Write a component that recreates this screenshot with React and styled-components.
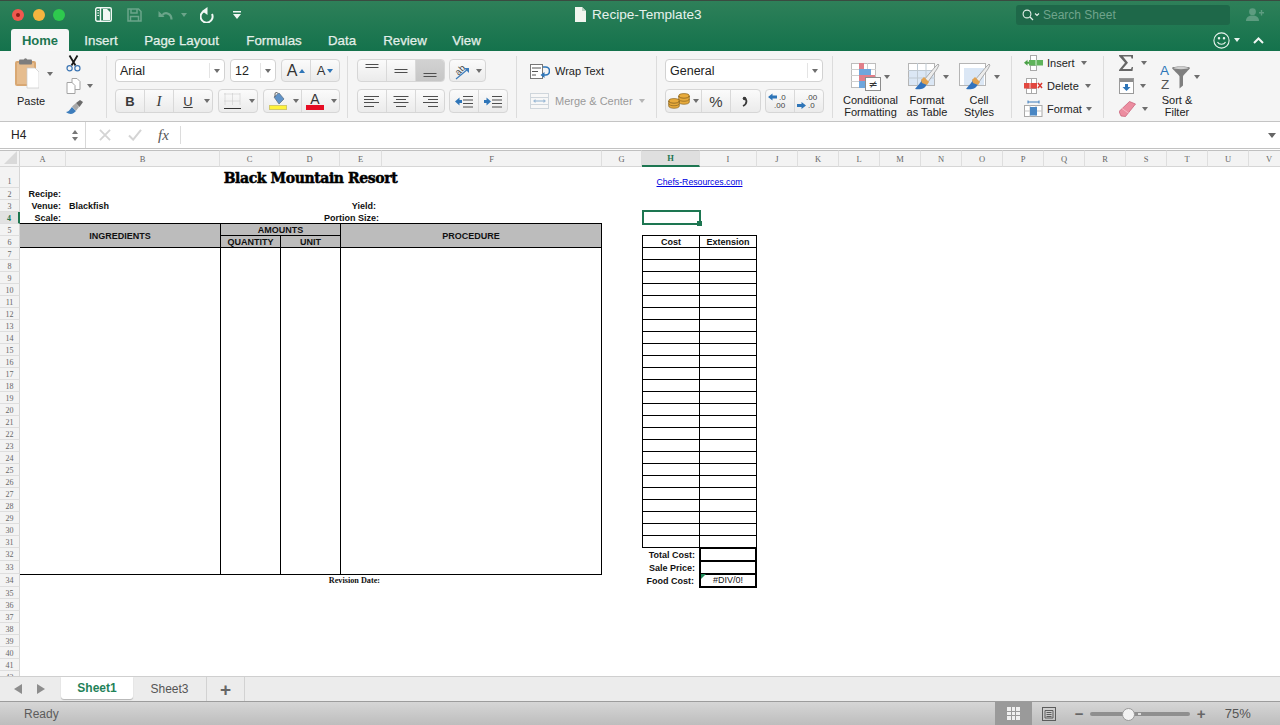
import React from "react";
import styled, { createGlobalStyle } from "styled-components";

const GlobalStyle = createGlobalStyle`
  html, body { margin: 0; padding: 0; background: #fff; }
  body { font-family: "Liberation Sans", Arial, sans-serif; }
`;

const Window = styled.div`
  width: 1280px;
  height: 725px;
  display: flex;
  flex-direction: column;
  overflow: hidden;
  background: #fff;
`;

/* ---------- green header ---------- */

const Header = styled.div`
  height: 51px;
  flex: none;
  background: linear-gradient(#2e8059, #14724c);
  border-top: 1px solid #3a4a40;
  box-sizing: border-box;
`;

const TitleRow = styled.div`
  height: 27px;
  display: flex;
  align-items: center;
  position: relative;
`;

const Light = styled.span`
  width: 12px;
  height: 12px;
  border-radius: 50%;
  background: ${(p) => p.$color};
  margin-left: ${(p) => p.$gap}px;
  flex: none;
  display: flex;
  align-items: center;
  justify-content: center;
  &::after {
    content: "";
    width: 4px;
    height: 4px;
    border-radius: 50%;
    background: ${(p) => p.$dot || "transparent"};
  }
`;

const TitleIcon = styled.span`
  display: flex;
  align-items: center;
  margin-left: ${(p) => p.$gap}px;
  flex: none;
`;

const DocTitle = styled.span`
  margin-left: 6px;
  font-size: 13.6px;
  color: #e6f1ec;
  width: 114px;
  white-space: nowrap;
`;

const SearchBox = styled.div`
  margin-left: 310px;
  width: 214px;
  height: 20px;
  border-radius: 3px;
  background: #1e6849;
  display: flex;
  align-items: center;
  padding-left: 6px;
  box-sizing: border-box;
  gap: 3px;
  font-size: 12px;
  color: #6fa48c;
`;

const TabRow = styled.div`
  height: 23px;
  display: flex;
  align-items: flex-end;
  padding-left: 11px;
`;

const Tab = styled.div`
  height: 22px;
  display: flex;
  align-items: center;
  justify-content: center;
  font-size: ${(p) => (p.$active ? 13 : 13.3)}px;
  font-weight: ${(p) => (p.$active ? 700 : 400)};
  color: ${(p) => (p.$active ? "#1d7651" : "#e3efe9")};
  background: ${(p) => (p.$active ? "#f6f6f6" : "transparent")};
  border-radius: 3px 3px 0 0;
  width: ${(p) => p.$w}px;
  margin-right: ${(p) => p.$gap}px;
  -webkit-text-stroke: ${(p) => (p.$active ? 0 : "0.25px")};
  white-space: nowrap;
`;

const TabTools = styled.div`
  margin-left: auto;
  height: 22px;
  display: flex;
  align-items: center;
  padding-right: 16px;
`;

/* ---------- ribbon ---------- */

const Ribbon = styled.div`
  height: 71px;
  flex: none;
  box-sizing: border-box;
  display: flex;
  background: #f5f5f5;
  border-bottom: 1px solid #c4c4c4;
`;

const Group = styled.div`
  width: ${(p) => p.$w}px;
  box-sizing: border-box;
  padding-left: ${(p) => p.$pad}px;
  margin: 5px 0 3px;
  border-right: ${(p) => (p.$last ? "none" : "1px solid #dcdcdc")};
  display: flex;
  flex-direction: ${(p) => p.$dir || "column"};
  flex: none;
`;

const Stack = styled.div`
  padding-top: 3px;
  display: flex;
  flex-direction: column;
  gap: 7px;
`;

const Row = styled.div`
  display: flex;
  gap: ${(p) => p.$gap ?? 4}px;
  height: ${(p) => p.$h}px;
`;

const Select = styled.div`
  width: ${(p) => p.$w}px;
  height: 100%;
  box-sizing: border-box;
  background: #fff;
  border: 1px solid #d2d2d2;
  border-radius: 4px;
  display: flex;
  align-items: center;
  justify-content: space-between;
  padding-left: 4px;
  font-size: 12.5px;
  color: #222;
`;

const SelectArrow = styled.span`
  width: 14px;
  height: 15px;
  border-left: 1px solid #e4e4e4;
  display: flex;
  align-items: center;
  justify-content: center;
`;

const Caret = styled.span`
  display: inline-block;
  flex: none;
  width: 0;
  height: 0;
  border-left: ${(p) => p.$s || 3}px solid transparent;
  border-right: ${(p) => p.$s || 3}px solid transparent;
  ${(p) => (p.$up ? "border-bottom" : "border-top")}: ${(p) => (p.$s || 3) + 1}px solid ${(p) => p.$color || "#6e6e6e"};
  margin-left: ${(p) => p.$ml || 0}px;
`;

const Segments = styled.div`
  display: flex;
  height: 100%;
  border: 1px solid #d6d6d6;
  border-radius: 4px;
  box-sizing: border-box;
  overflow: hidden;
  background: linear-gradient(#fbfbfb, #ebebeb);
`;

const Seg = styled.div`
  width: ${(p) => p.$w}px;
  display: flex;
  align-items: center;
  justify-content: center;
  flex: none;
  box-sizing: border-box;
  color: #333;
  border-right: ${(p) => (p.$noLine ? "none" : "1px solid #d9d9d9")};
  background: ${(p) => (p.$on ? "linear-gradient(#d2d2d2, #c6c6c6)" : "transparent")};
  &:last-child { border-right: none; }
`;

const BoldA = styled.span`
  font-size: ${(p) => p.$size}px;
  color: #333;
  line-height: 1;
  margin-right: 2px;
`;

const StyleLetter = styled.span`
  font-family: ${(p) => (p.$serif ? '"Liberation Serif", serif' : '"Liberation Sans", sans-serif')};
  font-weight: ${(p) => (p.$bold ? 700 : 400)};
  font-style: ${(p) => (p.$italic ? "italic" : "normal")};
  text-decoration: ${(p) => (p.$under ? "underline" : "none")};
  font-size: ${(p) => p.$size || 13}px;
  color: #3a3a3a;
`;

const PasteColumn = styled.div`
  width: 44px;
  margin-left: 15px;
  display: flex;
  flex-direction: column;
`;

const PasteIconRow = styled.div`
  display: flex;
  align-items: center;
  gap: 8px;
  margin-top: 2px;
`;

const RibbonLabel = styled.div`
  font-size: 11px;
  line-height: 12px;
  color: ${(p) => p.$color || "#222"};
  text-align: center;
  white-space: nowrap;
`;

const PasteLabel = styled(RibbonLabel)`
  width: 32px;
  margin-top: 6px;
`;

const ClipTools = styled.div`
  margin-left: 7px;
  display: flex;
  flex-direction: column;
  gap: 6px;
  width: 32px;
  margin-top: -1px;
`;

const ToolRow = styled.div`
  display: flex;
  align-items: center;
  gap: 6px;
`;

const WrapRow = styled.div`
  height: 30px;
  display: flex;
  align-items: center;
  gap: 5px;
`;

const BigButton = styled.div`
  width: ${(p) => p.$w}px;
  display: flex;
  flex-direction: column;
  align-items: center;
  flex: none;
`;

const BigIcon = styled.div`
  height: 33px;
  margin-top: 4px;
  margin-bottom: 1px;
  display: flex;
  align-items: center;
  gap: 3px;
  padding-left: ${(p) => p.$pl || 0}px;
`;

const CellRows = styled.div`
  margin-top: -5px;
  display: flex;
  flex-direction: column;
`;

const CellRow = styled.div`
  height: 23px;
  display: flex;
  align-items: center;
  gap: 4px;
  font-size: 11px;
  color: #222;
`;

const EditColumn = styled.div`
  width: 34px;
  margin-top: -1px;
  display: flex;
  flex-direction: column;
  gap: 7px;
`;

/* ---------- formula bar ---------- */

const FormulaBar = styled.div`
  height: 27px;
  flex: none;
  box-sizing: border-box;
  display: flex;
  align-items: center;
  background: #fff;
  border-bottom: 1px solid #c2c2c2;
`;

const NameBox = styled.div`
  width: 86px;
  height: 100%;
  flex: none;
  box-sizing: border-box;
  padding: 0 7px 0 11px;
  border-right: 1px solid #d8d8d8;
  display: flex;
  align-items: center;
  justify-content: space-between;
  font-size: 12px;
  color: #222;
`;

const Stepper = styled.div`
  display: flex;
  flex-direction: column;
  gap: 3px;
`;

const FormulaTools = styled.div`
  width: 95px;
  height: 18px;
  flex: none;
  box-sizing: border-box;
  padding-left: 13px;
  border-right: 1px solid #dcdcdc;
  display: flex;
  align-items: center;
  gap: 17px;
`;

const Fx = styled.span`
  font-family: "Liberation Serif", serif;
  font-style: italic;
  font-size: 15px;
  color: #555;
  margin-left: -1px;
`;

const FormulaFill = styled.div`
  flex: 1;
  display: flex;
  justify-content: flex-end;
  padding-right: 4px;
`;

/* ---------- sheet grid ---------- */

const colWidths = [46, 154, 60, 60, 42, 220, 40, 58, 57, 41, 41, 41, 41, 41, 41, 41, 41, 41, 41, 41, 41, 41];
const letters = "ABCDEFGHIJKLMNOPQRSTUV".split("");
const rowNumbers = Array.from({ length: 42 }, (_, i) => i + 1);
const colIndex = (c) => c.charCodeAt(0) - 63;

const Sheet = styled.div`
  flex: none;
  height: 527px;
  overflow: hidden;
  display: grid;
  grid-template-columns: 20px ${colWidths.map((w) => w + "px").join(" ")};
  grid-template-rows: 17px 21px repeat(30, 12px) repeat(3, 13px) repeat(8, 12px);
  background: #fff;
  border-top: 1px solid #fff;
  box-sizing: border-box;
`;

const Corner = styled.div`
  grid-column: 1;
  grid-row: 1;
  background: #f3f3f3;
  border-top: 1px solid #c0c0c0;
  border-bottom: 1px solid #d6d6d6;
  border-right: 1px solid #d6d6d6;
  box-sizing: border-box;
  display: flex;
  align-items: flex-end;
  justify-content: flex-end;
  padding: 0 2px 2px 0;
`;

const ColHeader = styled.div`
  grid-column: ${(p) => p.$col};
  grid-row: 1;
  display: flex;
  align-items: center;
  justify-content: center;
  box-sizing: border-box;
  font-family: "Liberation Serif", serif;
  font-size: 8.5px;
  color: ${(p) => (p.$active ? "#1d7651" : "#666")};
  font-weight: ${(p) => (p.$active ? 700 : 400)};
  background: ${(p) => (p.$active ? "#dfdfdf" : "#f3f3f3")};
  border-top: 1px solid #c0c0c0;
  border-right: 1px solid #dedede;
  border-bottom: ${(p) => (p.$active ? "2px solid #1d7651" : "1px solid #d6d6d6")};
`;

const RowHeader = styled.div`
  grid-column: 1;
  grid-row: ${(p) => p.$row + 1};
  display: flex;
  align-items: center;
  justify-content: center;
  box-sizing: border-box;
  padding-top: ${(p) => (p.$row === 1 ? 8 : 1)}px;
  font-family: "Liberation Serif", serif;
  font-size: 8px;
  color: ${(p) => (p.$active ? "#1d7651" : "#666")};
  font-weight: ${(p) => (p.$active ? 700 : 400)};
  background: ${(p) => (p.$active ? "#e2e2e2" : "#f3f3f3")};
  border-bottom: 1px solid #dedede;
  border-right: ${(p) => (p.$active ? "2px solid #1d7651" : "1px solid #d6d6d6")};
`;

const Cell = styled.div`
  grid-column: ${(p) => colIndex(p.$col)} / span ${(p) => p.$cols || 1};
  grid-row: ${(p) => p.$row + 1} / span ${(p) => p.$rows || 1};
  min-width: 0;
  display: flex;
  align-items: center;
  justify-content: ${(p) => p.$align || "flex-end"};
  padding: ${(p) => p.$pad || "0"};
  box-sizing: border-box;
  font-size: 9px;
  font-weight: 700;
  color: #111;
  white-space: nowrap;
`;

const SheetTitle = styled(Cell)`
  font-family: "DejaVu Serif", serif;
  font-size: 14px;
  letter-spacing: -0.4px;
  font-weight: 700;
  color: #000;
  -webkit-text-stroke: 0.5px #000;
  padding-right: 1px;
`;

const RevisionDate = styled(Cell)`
  font-family: "Liberation Serif", serif;
  font-size: 8.2px;
`;

const HyperLink = styled(Cell)`
  font-size: 8.7px;
  font-weight: 400;
  color: #0000e0;
  text-decoration: underline;
`;

const TableCell = styled(Cell)`
  border-left: ${(p) => (p.$noLeft ? "none" : "1px solid #000")};
  border-right: ${(p) => (p.$right ? "1px solid #000" : "none")};
  border-bottom: 1px solid #000;
  background: ${(p) => (p.$grey ? "#bcbcbc" : "transparent")};
  justify-content: center;
`;

const TopTableCell = styled(TableCell)`
  border-top: 1px solid #000;
  margin-top: -1px;
`;

const BodyColumn = styled(TableCell)`
  margin-bottom: -1px;
`;

const CostCell = styled(Cell)`
  border-left: ${(p) => (p.$left ? "1px solid #000" : "none")};
  border-right: 1px solid #000;
  border-bottom: 1px solid #000;
  border-top: ${(p) => (p.$top ? "1px solid #000" : "none")};
  margin-top: ${(p) => (p.$top ? "-1px" : "0")};
  justify-content: center;
`;

const TotalCell = styled(Cell)`
  position: relative;
  margin: ${(p) => (p.$top ? "-1px" : "0")} 0 -1px -1px;
  border: 2px solid #000;
  border-top-width: ${(p) => (p.$top ? "2px" : "0")};
  justify-content: center;
  font-weight: 400;
`;

const ErrorFlag = styled.span`
  position: absolute;
  left: 0;
  top: 0;
  width: 0;
  height: 0;
  border-top: 5px solid #1f8a5a;
  border-right: 5px solid transparent;
`;

const Selection = styled(Cell)`
  position: relative;
  margin: -2px -1px -1px 0;
  border: 2px solid #1d7651;
  &::after {
    content: "";
    position: absolute;
    right: -3px;
    bottom: -3px;
    width: 5px;
    height: 5px;
    background: #1d7651;
  }
`;

/* ---------- sheet tabs and status bar ---------- */

const SheetTabs = styled.div`
  height: 26px;
  flex: none;
  box-sizing: border-box;
  display: flex;
  background: #ececec;
  border-top: 1px solid #cfcfcf;
  border-bottom: 1px solid #9c9c9c;
`;

const TabArrows = styled.div`
  width: 61px;
  flex: none;
  display: flex;
  align-items: center;
  gap: 15px;
  padding-left: 14px;
  box-sizing: border-box;
`;

const Arrow = styled.span`
  width: 0;
  height: 0;
  border-top: 5px solid transparent;
  border-bottom: 5px solid transparent;
  ${(p) => (p.$left ? "border-right" : "border-left")}: 8px solid #8d8d8d;
`;

const SheetTab = styled.div`
  width: ${(p) => p.$w}px;
  height: ${(p) => (p.$active ? "22px" : "100%")};
  flex: none;
  box-sizing: border-box;
  display: flex;
  align-items: center;
  justify-content: center;
  font-size: 12px;
  font-weight: ${(p) => (p.$active ? 700 : 400)};
  color: ${(p) => (p.$active ? "#1f8259" : "#555")};
  background: ${(p) => (p.$active ? "#fff" : "transparent")};
  border-radius: ${(p) => (p.$active ? "0 0 3px 3px" : "0")};
  box-shadow: ${(p) => (p.$active ? "0 1px 1px #b4b4b4" : "none")};
  border-right: ${(p) => (p.$line ? "1px solid #d2d2d2" : "none")};
`;

const AddSheet = styled.span`
  font-size: 19px;
  font-weight: 700;
  line-height: 1;
  color: #666;
`;

const StatusBar = styled.div`
  flex: 1;
  display: flex;
  align-items: center;
  background: linear-gradient(#d6d6d6, #bdbdbd);
  color: #5c5c5c;
  font-size: 12px;
  padding-left: 24px;
`;

const ViewButton = styled.div`
  margin-left: ${(p) => p.$ml || 0}px;
  width: ${(p) => p.$w}px;
  height: 23px;
  flex: none;
  display: flex;
  align-items: center;
  justify-content: center;
  background: ${(p) => (p.$on ? "#9a9a9a" : "transparent")};
`;

const ZoomControls = styled.div`
  margin-left: 8px;
  display: flex;
  align-items: center;
`;

const ZoomTrack = styled.div`
  width: 100px;
  height: 4px;
  border-radius: 2px;
  background: #8f8f8f;
  margin: 0 6px 0 5px;
  position: relative;
  flex: none;
`;

const ZoomThumb = styled.span`
  position: absolute;
  left: 32px;
  top: -4px;
  width: 11px;
  height: 11px;
  border-radius: 50%;
  background: #f2f2f2;
  border: 1px solid #999;
`;

const ZoomTick = styled.span`
  position: absolute;
  left: 48px;
  top: 1px;
  width: 3px;
  height: 2px;
  background: #dcdcdc;
`;

const ZoomSign = styled.span`
  font-size: 15px;
  font-weight: 700;
  color: #666;
  width: 11px;
  text-align: center;
  flex: none;
`;

const ZoomValue = styled.span`
  margin-left: 18px;
  font-size: 13px;
  color: #555;
  flex: none;
`;

/* ---------- icons ---------- */

const SidebarIcon = () => (
  <svg width="17" height="15" viewBox="0 0 17 15" fill="none">
    <rect x="0.7" y="0.7" width="15.6" height="13.6" rx="1.5" stroke="#f2f8f5" strokeWidth="1.4" />
    <path d="M5.5 1v13" stroke="#f2f8f5" strokeWidth="1.4" />
    <path d="M2.3 3.5h1.8M2.3 6h1.8M2.3 8.5h1.8" stroke="#f2f8f5" />
    <path d="M8 2h4l3 3v8H8z" fill="#f2f8f5" />
  </svg>
);

const SaveIcon = () => (
  <svg width="15" height="14" viewBox="0 0 15 14" fill="none" stroke="#6ba58a" strokeWidth="1.5">
    <path d="M1 1h10.5L14 3.5V13H1z" />
    <path d="M4 1v4h6V1M3.5 13V8.5h8V13" />
  </svg>
);

const UndoIcon = () => (
  <svg width="16" height="13" viewBox="0 0 16 13" fill="none" stroke="#6ba58a" strokeWidth="2.2">
    <path d="M14.5 11.5c0-6-6-8-9-4.5" />
    <path d="M1.5 3v6h6z" fill="#6ba58a" stroke="none" />
  </svg>
);

const RedoIcon = () => (
  <svg width="16" height="16" viewBox="0 0 16 16" fill="none">
    <path d="M5 3.5a6 6 0 1 0 7.5 3" stroke="#f2f8f5" strokeWidth="2" transform="translate(-0.5 0.5)" />
    <path d="M10.5 0v8L5 4z" fill="#f2f8f5" transform="translate(-3 0)" />
  </svg>
);

const CustomizeIcon = () => (
  <svg width="10" height="8" viewBox="0 0 10 8">
    <path d="M1 0h8v1.5H1zM1 3h8L5 8z" fill="#f0f6f3" />
  </svg>
);

const DocIcon = () => (
  <svg width="11" height="15" viewBox="0 0 11 15">
    <path d="M0 0h7l4 4v11H0z" fill="#f1f5ef" />
    <path d="M7 0l4 4H7z" fill="#b7cfc0" />
  </svg>
);

const SearchIcon = () => (
  <svg width="18" height="12" viewBox="0 0 18 12" fill="none" stroke="#e4efe9">
    <circle cx="5" cy="5" r="3.9" strokeWidth="1.1" />
    <path d="M8 8l3 3" strokeWidth="1.3" />
    <path d="M13 4.5l2 2 2-2" strokeWidth="1.1" />
  </svg>
);

const PersonAddIcon = () => (
  <svg width="18" height="13" viewBox="0 0 18 13" fill="#5d9c80">
    <circle cx="6.5" cy="3.7" r="3.4" />
    <path d="M0 13c0-4 3-5.5 6.5-5.5S13 9 13 13z" />
    <path d="M13 4h1.8V2h1.4v2H18v1.4h-1.8v2h-1.4v-2H13z" />
  </svg>
);

const SmileyIcon = () => (
  <svg width="17" height="17" viewBox="0 0 17 17" fill="none" stroke="#e9f3ee" strokeWidth="1.1">
    <circle cx="8.5" cy="8.5" r="7.6" />
    <path d="M4.5 10c1.5 3 6.5 3 8 0" />
    <circle cx="6" cy="6.3" r="0.7" fill="#e9f3ee" />
    <circle cx="11" cy="6.3" r="0.7" fill="#e9f3ee" />
  </svg>
);

const ChevronUp = () => (
  <svg width="11" height="7" viewBox="0 0 11 7" fill="none" stroke="#f0f6f3" strokeWidth="2">
    <path d="M1 6l4.5-4.5L10 6" />
  </svg>
);

const PasteIcon = () => (
  <svg width="24" height="31" viewBox="0 0 24 31">
    <rect x="0" y="3" width="21" height="25" rx="2" fill="#d9a873" />
    <rect x="2" y="5" width="17" height="21" fill="#e6bd8f" />
    <rect x="4" y="1.5" width="13" height="5" rx="1" fill="#7d7d7d" />
    <circle cx="10.5" cy="1.8" r="1.6" fill="#7d7d7d" />
    <path d="M12 10h8l4 4v16H12z" fill="#fff" stroke="#c9c9c9" strokeWidth="0.7" />
  </svg>
);

const CutIcon = () => (
  <svg width="15" height="17" viewBox="0 0 15 17" fill="none">
    <path d="M3.5 0.5l6 10M11.5 0.5l-6 10" stroke="#1a1a1a" strokeWidth="1.8" />
    <circle cx="3.6" cy="13.2" r="2.6" stroke="#3b75b3" strokeWidth="1.2" />
    <circle cx="11.4" cy="13.2" r="2.6" stroke="#3b75b3" strokeWidth="1.2" />
  </svg>
);

const CopyIcon = () => (
  <svg width="15" height="16" viewBox="0 0 15 16" fill="#fff" stroke="#a4a4a4">
    <path d="M6 .5h5l3 3v8H6z" />
    <path d="M1 4.5h5l3 3v8H1z" />
  </svg>
);

const BrushIcon = () => (
  <svg width="17" height="16" viewBox="0 0 17 16">
    <path d="M0 12c3 0 4-3 6-5l4 4c-2 2-5 5-10 1z" fill="#3d7dbc" />
    <path d="M6 6.500l4-3.500 3 4-3 3.700z" fill="#a8a8a8" />
    <path d="M10 3l4-3 3 2-3.500 5z" fill="#6b6b6b" />
  </svg>
);

const BordersIcon = () => (
  <svg width="17" height="17" viewBox="0 0 17 17" fill="none">
    <path d="M.5 1h16M.5 8h16M1 .5v12M8.500.5v12M16 .5v12" stroke="#c4c4c4" strokeDasharray="1 1" />
    <path d="M0 15.500h17" stroke="#333" />
  </svg>
);

const FillIcon = () => (
  <svg width="18" height="18" viewBox="0 0 18 18">
    <path d="M5 5l5-4 5 6-5 5z" fill="#5f93c9" stroke="#586b80" strokeWidth="0.7" />
    <path d="M9 1.500C8 0 6 0 6 2v3" stroke="#666" fill="none" />
    <rect x="0.5" y="13.500" width="17" height="4" fill="#fff33b" stroke="#d2c96a" />
  </svg>
);

const FontColorIcon = () => (
  <svg width="18" height="18" viewBox="0 0 18 18">
    <text x="9" y="12" fontSize="14" textAnchor="middle" fill="#333" fontFamily="Liberation Sans">A</text>
    <rect x="0" y="13" width="18" height="5" fill="#e60d24" />
  </svg>
);

const Lines = ({ widths, align = "left", top = 2, gap = 3.2, w = 16, h = 15 }) => (
  <svg width={w} height={h} viewBox={`0 0 ${w} ${h}`} stroke="#4e4e4e" strokeWidth="1">
    {widths.map((lw, i) => {
      const x = align === "left" ? 0 : align === "right" ? w - lw : (w - lw) / 2;
      const y = Math.round(top + i * gap) + 0.5;
      return <line key={i} x1={x} x2={x + lw} y1={y} y2={y} />;
    })}
  </svg>
);

const OrientIcon = () => (
  <svg width="18" height="18" viewBox="0 0 18 18">
    <text x="2" y="11" fontSize="9" fill="#444" fontFamily="Liberation Sans" transform="rotate(-45 7 8)">ab</text>
    <path d="M3 17L15 7" stroke="#3d7dbc" strokeWidth="1.2" />
    <path d="M11 6h5v5z" fill="#3d7dbc" />
  </svg>
);

const IndentIcon = ({ flip }) => (
  <svg width="18" height="13" viewBox="0 0 18 13">
    <path d="M8 1.500h10M8 5h10M8 8.500h10M8 12h10" stroke="#4e4e4e" />
    <path d={flip ? "M7 6.500L2.500 2.500V5H0v3h2.500v2.500z" : "M0 6.500l4.500-4V5H7v3H4.500v2.500z"} fill="#2e75b8" />
  </svg>
);

const WrapIcon = () => (
  <svg width="20" height="15" viewBox="0 0 20 15" fill="none">
    <rect x="0.5" y="0.5" width="12" height="14" fill="#fff" stroke="#777" />
    <path d="M2 4h9M2 7.500h6M2 11h4" stroke="#555" />
    <path d="M13 3h2.500a3.500 3.500 0 0 1 0 8H12" stroke="#2e75b8" strokeWidth="1.6" />
    <path d="M14.500 8v6l-4-3z" fill="#2e75b8" />
  </svg>
);

const MergeIcon = () => (
  <svg width="20" height="16" viewBox="0 0 20 16" fill="#f7f7f7" stroke="#cfd6dc">
    <rect x="0.5" y="0.5" width="18" height="15" />
    <path d="M.5 4.500h18M.5 11.500h18" />
    <path d="M4 8h11" stroke="#9cbad6" strokeWidth="1.2" />
    <path d="M3 8l2.500-2v4zM16 8l-2.500-2v4z" fill="#9cbad6" stroke="none" />
  </svg>
);

const CoinsIcon = () => (
  <svg width="22" height="16" viewBox="0 0 22 16">
    <g stroke="#8a6420" strokeWidth="0.7" fill="#e8ab3c">
      <ellipse cx="16" cy="3" rx="5.3" ry="2.4" />
      <path d="M10.700 3v6c0 3 10.600 3 10.600 0V3c0 3-10.600 3-10.600 0z" />
      <path d="M10.700 6c0 3 10.600 3 10.600 0" fill="none" />
      <ellipse cx="6" cy="8" rx="5.3" ry="2.4" />
      <path d="M.7 8v5c0 3 10.600 3 10.600 0V8c0 3-10.600 3-10.600 0z" />
      <path d="M.7 10.500c0 3 10.600 3 10.600 0" fill="none" />
    </g>
  </svg>
);

const CommaIcon = () => (
  <svg width="7" height="11" viewBox="0 0 7 11" fill="none">
    <path d="M1.500 1.500c4 1.500 4 6.500-.5 8.500" stroke="#3a3a3a" strokeWidth="1.8" />
    <circle cx="2.500" cy="2.500" r="1.800" fill="#3a3a3a" />
  </svg>
);

const DecimalIcon = ({ more }) => (
  <svg width="24" height="17" viewBox="0 0 24 17">
    <path d={more ? "M0 4l4.500-3.500V2.500H9v3H4.500v2z" : "M9 12.500L4.500 9V11H0v3h4.500v2z"} fill="#2e75b8" />
    <text x={more ? 11 : 9} y="7" fontSize="8" fill="#444" fontFamily="Liberation Sans">{more ? ".0" : ".00"}</text>
    <text x={more ? 6 : 11} y="15" fontSize="8" fill="#444" fontFamily="Liberation Sans">{more ? ".00" : ".0"}</text>
  </svg>
);

const CondFormatIcon = () => (
  <svg width="30" height="28" viewBox="0 0 30 28">
    <rect x="0.5" y="0.5" width="24" height="24" fill="#fff" stroke="#bdbdbd" />
    <path d="M8.500 0v25M16.500 0v25M0 6.500h25M0 12.500h25M0 18.500h25" stroke="#cfcfcf" />
    <rect x="8" y="0" width="5" height="6" fill="#e07f8a" />
    <rect x="8" y="6" width="12" height="6" fill="#6ea6dc" />
    <rect x="8" y="12" width="16" height="6" fill="#e07f8a" />
    <rect x="8" y="18" width="9" height="7" fill="#6ea6dc" />
    <rect x="14.500" y="14.500" width="15" height="13" fill="#fff" stroke="#8d8d8d" />
    <text x="22" y="25" fontSize="11" textAnchor="middle" fill="#333" fontFamily="DejaVu Sans">≠</text>
  </svg>
);

const PaintedTableIcon = ({ full }) => (
  <svg width="32" height="28" viewBox="0 0 32 28">
    <rect x="0.5" y="0.5" width="26" height="22" fill="#fff" stroke="#b5b5b5" />
    {full ? (
      <rect x="5" y="5" width="20" height="17" fill="#dbe7f5" />
    ) : (
      <>
        <rect x="1" y="7" width="25" height="15" fill="#dbe7f5" />
        <path d="M9.500 0v23M18 0v23M0 7.500h27M0 15h27" stroke="#bfc9d2" />
      </>
    )}
    <path d="M16 17L27 4l3-3 1 1-2 4-9 13z" fill="#ececec" stroke="#8f8f8f" strokeWidth="0.7" />
    <path d="M14 16c-1 4-4 6-7 10 5 1 10 0 12-5z" fill="#3273bd" />
    <path d="M13 17l3-3 5 5-2 3-5-2z" fill="#e2a24f" />
  </svg>
);

const InsertIcon = () => (
  <svg width="19" height="16" viewBox="0 0 19 16">
    <g fill="#fff" stroke="#a9a9a9">
      <rect x="6.5" y="0.5" width="6" height="5" />
      <rect x="6.5" y="10.500" width="6" height="5" />
    </g>
    <rect x="5" y="5" width="14" height="5.5" fill="#5fb35a" />
    <path d="M12 5v5.500" stroke="#d9efd8" />
    <path d="M0 7.700l3.500-3v2h1.500v2H3.500v2z" fill="#4aa046" />
  </svg>
);

const DeleteIcon = () => (
  <svg width="19" height="16" viewBox="0 0 19 16">
    <g fill="#fff" stroke="#a9a9a9">
      <rect x="2.5" y="0.5" width="5" height="5" />
      <rect x="7.5" y="0.5" width="5" height="5" />
      <rect x="2.5" y="10.500" width="5" height="5" />
      <rect x="7.5" y="10.500" width="5" height="5" />
    </g>
    <rect x="0" y="5" width="13" height="5.5" fill="#e2473f" />
    <path d="M6 5v5.500" stroke="#f7c9c6" />
    <path d="M14 5l4 5M18 5l-4 5" stroke="#d9362f" strokeWidth="1.5" />
  </svg>
);

const FormatIcon = () => (
  <svg width="19" height="17" viewBox="0 0 19 17">
    <path d="M4 2h11M4 .5v3M15 .5v3" stroke="#3d7dbc" />
    <rect x="0.5" y="5.500" width="17.500" height="11" fill="#fff" stroke="#a9a9a9" />
    <path d="M6 5.500v11M12 5.500v11M.5 11h17.500" stroke="#c5c5c5" />
    <rect x="6" y="7" width="7" height="8.5" fill="#4a87c4" />
  </svg>
);

const SumIcon = () => (
  <svg width="15" height="16" viewBox="0 0 15 16">
    <path d="M0 0h14v3.500h-1.500L12 1.500H4l5 6.200L3.500 14H12l.8-2H14l-.5 4H0v-1l6-7.200L0 1z" fill="#666" />
  </svg>
);

const FillDownIcon = () => (
  <svg width="15" height="16" viewBox="0 0 15 16">
    <rect x="0.5" y="0.5" width="14" height="15" fill="#fff" stroke="#9a9a9a" />
    <rect x="1" y="1" width="13" height="3" fill="#8d8d8d" />
    <path d="M7.500 13l-4-4h2.500V6h3v3h2.500z" fill="#2e75b8" />
  </svg>
);

const EraserIcon = () => (
  <svg width="17" height="16" viewBox="0 0 17 16">
    <path d="M0 10.500L10.500.5 16.500 3 6.500 15.500 2 15z" fill="#ec8da0" stroke="#c45a73" strokeWidth="0.7" />
    <path d="M3 7.500l7 5" stroke="#f7c3cd" strokeWidth="0.8" />
  </svg>
);

const SortIcon = () => (
  <svg width="31" height="30" viewBox="0 0 31 30">
    <text x="0" y="12.500" fontSize="13.5" fill="#2e75b8" fontFamily="Liberation Sans">A</text>
    <text x="1" y="27" fontSize="13.5" fill="#555" fontFamily="Liberation Sans">Z</text>
    <path d="M12 6c0-2 18-2 18 0 0 1-6.500 6.500-7 8.500v9l-3.500 3V14.500c-.5-2-7.500-7.500-7.500-8.500z" fill="#7f7f7f" />
    <ellipse cx="21" cy="6" rx="7.500" ry="1.200" fill="#cfcfcf" />
  </svg>
);

const CloseMark = () => (
  <svg width="12" height="12" viewBox="0 0 13 13" fill="none" stroke="#d4d4d4" strokeWidth="2">
    <path d="M1 1l11 11M12 1L1 12" />
  </svg>
);

const CheckMark = () => (
  <svg width="14" height="12" viewBox="0 0 15 13" fill="none" stroke="#d4d4d4" strokeWidth="2.2">
    <path d="M1 7l4.500 4.500L14 1" />
  </svg>
);

const GridViewIcon = () => (
  <svg width="13" height="13" viewBox="0 0 13 13">
    <path d="M0 0h13v13H0z" fill="#f0f0f0" />
    <path d="M4.500 0v13M8.500 0v13M0 4.500h13M0 8.500h13" stroke="#9a9a9a" />
  </svg>
);

const PageViewIcon = () => (
  <svg width="14" height="14" viewBox="0 0 14 14" fill="none" stroke="#5c5c5c">
    <rect x="0.5" y="0.5" width="13" height="13" />
    <path d="M3 3.500h8v7.500H3zM4.500 5.500h5M4.500 7.500h5M4.500 9.500h5" />
  </svg>
);

const TriangleCorner = () => (
  <svg width="13" height="13" viewBox="0 0 13 13">
    <path d="M13 0v13H0z" fill="#d9d9d9" />
  </svg>
);

/* ---------- page ---------- */

const ribbonTabs = [
  ["Insert", 34, 26],
  ["Page Layout", 75, 27],
  ["Formulas", 56, 26],
  ["Data", 28, 27],
  ["Review", 44, 25],
  ["View", 29, 0],
];

const costRows = Array.from({ length: 25 }, (_, i) => i + 7);

const App = () => {
  return (
    <Window>
      <GlobalStyle />

      <Header>
        <TitleRow>
          <Light $color="#f1584f" $dot="#8f1b16" $gap={12} />
          <Light $color="#f5b53f" $gap={9} />
          <Light $color="#2ec94e" $gap={8} />
          <TitleIcon $gap={30}><SidebarIcon /></TitleIcon>
          <TitleIcon $gap={15}><SaveIcon /></TitleIcon>
          <TitleIcon $gap={15}><UndoIcon /></TitleIcon>
          <TitleIcon $gap={8}><Caret $color="#6ba58a" /></TitleIcon>
          <TitleIcon $gap={13}><RedoIcon /></TitleIcon>
          <TitleIcon $gap={16}><CustomizeIcon /></TitleIcon>
          <TitleIcon $gap={333}><DocIcon /></TitleIcon>
          <DocTitle>Recipe-Template3</DocTitle>
          <SearchBox>
            <SearchIcon />
            Search Sheet
          </SearchBox>
          <TitleIcon $gap={16}><PersonAddIcon /></TitleIcon>
        </TitleRow>
        <TabRow>
          <Tab $active $w={58} $gap={15}>Home</Tab>
          {ribbonTabs.map(([name, w, gap]) => (
            <Tab key={name} $w={w} $gap={gap}>{name}</Tab>
          ))}
          <TabTools>
            <SmileyIcon />
            <Caret $color="#e9f3ee" $ml={4} />
            <TitleIcon $gap={13}><ChevronUp /></TitleIcon>
          </TabTools>
        </TabRow>
      </Header>

      <Ribbon>
        <Group $w={107} $pad={0} $dir="row">
          <PasteColumn>
            <PasteIconRow>
              <PasteIcon />
              <Caret />
            </PasteIconRow>
            <PasteLabel>Paste</PasteLabel>
          </PasteColumn>
          <ClipTools>
            <ToolRow><CutIcon /></ToolRow>
            <ToolRow><CopyIcon /><Caret /></ToolRow>
            <ToolRow><BrushIcon /></ToolRow>
          </ClipTools>
        </Group>

        <Group $w={241} $pad={8}>
          <Stack>
            <Row $h={23} $gap={5}>
              <Select $w={110}>Arial<SelectArrow><Caret /></SelectArrow></Select>
              <Select $w={46}>12<SelectArrow><Caret /></SelectArrow></Select>
              <Segments>
                <Seg $w={29}><BoldA $size={16}>A</BoldA><Caret $up $color="#2e75b8" /></Seg>
                <Seg $w={28}><BoldA $size={13}>A</BoldA><Caret $color="#2e75b8" /></Seg>
              </Segments>
            </Row>
            <Row $h={24} $gap={5}>
              <Segments>
                <Seg $w={29}><StyleLetter $bold>B</StyleLetter></Seg>
                <Seg $w={29}><StyleLetter $serif $italic $size={15}>I</StyleLetter></Seg>
                <Seg $w={28} $noLine><StyleLetter $under>U</StyleLetter></Seg>
                <Seg $w={10}><Caret /></Seg>
              </Segments>
              <Segments>
                <Seg $w={27} $noLine><BordersIcon /></Seg>
                <Seg $w={11}><Caret /></Seg>
              </Segments>
              <Segments>
                <Seg $w={27} $noLine><FillIcon /></Seg>
                <Seg $w={11}><Caret /></Seg>
                <Seg $w={26} $noLine><FontColorIcon /></Seg>
                <Seg $w={11}><Caret /></Seg>
              </Segments>
            </Row>
          </Stack>
        </Group>

        <Group $w={169} $pad={9}>
          <Stack>
            <Row $h={23}>
              <Segments>
                <Seg $w={29}><Lines widths={[13, 13]} align="center" top={1} gap={3} /></Seg>
                <Seg $w={29}><Lines widths={[13, 13]} align="center" top={6} gap={3} /></Seg>
                <Seg $w={28} $on><Lines widths={[13, 13]} align="center" top={10} gap={3} /></Seg>
              </Segments>
              <Segments>
                <Seg $w={23} $noLine><OrientIcon /></Seg>
                <Seg $w={12}><Caret /></Seg>
              </Segments>
            </Row>
            <Row $h={24}>
              <Segments>
                <Seg $w={29}><Lines widths={[15, 10, 15, 10]} /></Seg>
                <Seg $w={29}><Lines widths={[15, 10, 15, 10]} align="center" /></Seg>
                <Seg $w={28}><Lines widths={[15, 10, 15, 10]} align="right" /></Seg>
              </Segments>
              <Segments>
                <Seg $w={29}><IndentIcon /></Seg>
                <Seg $w={28}><IndentIcon flip /></Seg>
              </Segments>
            </Row>
          </Stack>
        </Group>

        <Group $w={140} $pad={13}>
          <WrapRow>
            <WrapIcon />
            <RibbonLabel>Wrap Text</RibbonLabel>
          </WrapRow>
          <WrapRow>
            <MergeIcon />
            <RibbonLabel $color="#9a9a9a">Merge &amp; Center</RibbonLabel>
            <Caret $color="#b5b5b5" $ml={1} />
          </WrapRow>
        </Group>

        <Group $w={176} $pad={8}>
          <Stack>
            <Row $h={23}>
              <Select $w={158}>General<SelectArrow><Caret /></SelectArrow></Select>
            </Row>
            <Row $h={24}>
              <Segments>
                <Seg $w={25} $noLine><CoinsIcon /></Seg>
                <Seg $w={11}><Caret /></Seg>
                <Seg $w={29}><StyleLetter $size={15}>%</StyleLetter></Seg>
                <Seg $w={29}><CommaIcon /></Seg>
              </Segments>
              <Segments>
                <Seg $w={29}><DecimalIcon more /></Seg>
                <Seg $w={28}><DecimalIcon /></Seg>
              </Segments>
            </Row>
          </Stack>
        </Group>

        <Group $w={179} $pad={9} $dir="row">
          <BigButton $w={57}>
            <BigIcon><CondFormatIcon /><Caret /></BigIcon>
            <RibbonLabel>Conditional<br />Formatting</RibbonLabel>
          </BigButton>
          <BigButton $w={56}>
            <BigIcon $pl={3}><PaintedTableIcon /><Caret /></BigIcon>
            <RibbonLabel>Format<br />as Table</RibbonLabel>
          </BigButton>
          <BigButton $w={48}>
            <BigIcon><PaintedTableIcon full /><Caret /></BigIcon>
            <RibbonLabel>Cell<br />Styles</RibbonLabel>
          </BigButton>
        </Group>

        <Group $w={92} $pad={12}>
          <CellRows>
            <CellRow><InsertIcon />Insert<Caret $ml={2} /></CellRow>
            <CellRow><DeleteIcon />Delete<Caret $ml={2} /></CellRow>
            <CellRow><FormatIcon />Format<Caret /></CellRow>
          </CellRows>
        </Group>

        <Group $w={176} $pad={15} $dir="row" $last>
          <EditColumn>
            <ToolRow><SumIcon /><Caret $ml={1} /></ToolRow>
            <ToolRow><FillDownIcon /><Caret /></ToolRow>
            <ToolRow><EraserIcon /><Caret /></ToolRow>
          </EditColumn>
          <BigButton $w={48}>
            <BigIcon $pl={5}><SortIcon /><Caret /></BigIcon>
            <RibbonLabel>Sort &amp;<br />Filter</RibbonLabel>
          </BigButton>
        </Group>
      </Ribbon>

      <FormulaBar>
        <NameBox>
          H4
          <Stepper>
            <Caret $up $color="#777" />
            <Caret $color="#777" />
          </Stepper>
        </NameBox>
        <FormulaTools>
          <CloseMark />
          <CheckMark />
          <Fx>fx</Fx>
        </FormulaTools>
        <FormulaFill><Caret $s={4} $color="#666" /></FormulaFill>
      </FormulaBar>

      <Sheet>
        <Corner><TriangleCorner /></Corner>
        {letters.map((l, i) => (
          <ColHeader key={l} $col={i + 2} $active={l === "H"}>{l}</ColHeader>
        ))}
        {rowNumbers.map((n) => (
          <RowHeader key={n} $row={n} $active={n === 4}>{n}</RowHeader>
        ))}

        <SheetTitle $col="A" $cols={6} $row={1} $align="center">Black Mountain Resort</SheetTitle>
        <Cell $col="A" $row={2} $pad="0 5px 0 0">Recipe:</Cell>
        <Cell $col="A" $row={3} $pad="0 5px 0 0">Venue:</Cell>
        <Cell $col="B" $row={3} $align="flex-start" $pad="0 0 0 3px">Blackfish</Cell>
        <Cell $col="A" $row={4} $pad="0 5px 0 0">Scale:</Cell>
        <Cell $col="D" $cols={2} $row={3} $pad="0 6px 0 0">Yield:</Cell>
        <Cell $col="D" $cols={2} $row={4} $pad="0 3px 0 0">Portion Size:</Cell>

        <TopTableCell $col="A" $cols={2} $row={5} $rows={2} $grey $noLeft>INGREDIENTS</TopTableCell>
        <TopTableCell $col="C" $cols={2} $row={5} $grey>AMOUNTS</TopTableCell>
        <TableCell $col="C" $row={6} $grey>QUANTITY</TableCell>
        <TableCell $col="D" $row={6} $grey>UNIT</TableCell>
        <TopTableCell $col="E" $cols={2} $row={5} $rows={2} $grey $right>PROCEDURE</TopTableCell>

        <BodyColumn $col="A" $cols={2} $row={7} $rows={27} $noLeft />
        <BodyColumn $col="C" $row={7} $rows={27} />
        <BodyColumn $col="D" $row={7} $rows={27} />
        <BodyColumn $col="E" $cols={2} $row={7} $rows={27} $right />

        <RevisionDate $col="D" $cols={2} $row={34} $pad="0 2px 0 0">Revision Date:</RevisionDate>

        <HyperLink $col="H" $cols={2} $row={1} $pad="8px 0 0 0" $align="center">Chefs-Resources.com</HyperLink>
        <Selection $col="H" $row={4} />

        <CostCell $col="H" $row={6} $left $top>Cost</CostCell>
        <CostCell $col="I" $row={6} $top>Extension</CostCell>
        {costRows.map((n) => (
          <React.Fragment key={n}>
            <CostCell $col="H" $row={n} $left />
            <CostCell $col="I" $row={n} />
          </React.Fragment>
        ))}

        <Cell $col="H" $row={32} $pad="0 5px 0 0">Total Cost:</Cell>
        <Cell $col="H" $row={33} $pad="0 5px 0 0">Sale Price:</Cell>
        <Cell $col="H" $row={34} $pad="0 6px 0 0">Food Cost:</Cell>
        <TotalCell $col="I" $row={32} $top />
        <TotalCell $col="I" $row={33} />
        <TotalCell $col="I" $row={34}><ErrorFlag />#DIV/0!</TotalCell>
      </Sheet>

      <SheetTabs>
        <TabArrows>
          <Arrow $left />
          <Arrow />
        </TabArrows>
        <SheetTab $active $w={72}>Sheet1</SheetTab>
        <SheetTab $w={74} $line>Sheet3</SheetTab>
        <SheetTab $w={38} $line><AddSheet>+</AddSheet></SheetTab>
      </SheetTabs>

      <StatusBar>
        Ready
        <ViewButton $on $w={37} $ml={936}><GridViewIcon /></ViewButton>
        <ViewButton $w={34}><PageViewIcon /></ViewButton>
        <ZoomControls>
          <ZoomSign>−</ZoomSign>
          <ZoomTrack><ZoomThumb /><ZoomTick /></ZoomTrack>
          <ZoomSign>+</ZoomSign>
          <ZoomValue>75%</ZoomValue>
        </ZoomControls>
      </StatusBar>
    </Window>
  );
};

export default App;
